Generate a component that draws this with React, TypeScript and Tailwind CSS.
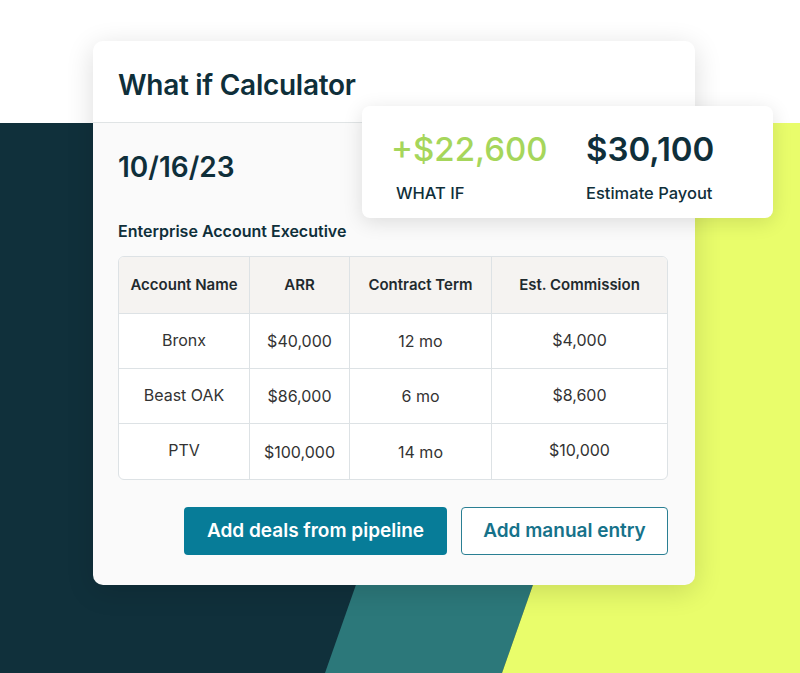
import React from "react";

const rows = [
  { name: "Bronx", arr: "$40,000", term: "12 mo", comm: "$4,000" },
  { name: "Beast OAK", arr: "$86,000", term: "6 mo", comm: "$8,600" },
  { name: "PTV", arr: "$100,000", term: "14 mo", comm: "$10,000" },
];

const cols = "grid grid-cols-[131px_100px_142px_175px]";

function Backdrop() {
  // decorative stripes behind the card
  return (
    <svg className="absolute inset-0" width="800" height="673" viewBox="0 0 800 673">
      <rect x="0" y="123" width="800" height="550" fill="#10303b" />
      <polygon points="518,123 695,123 502,673 325,673" fill="#2c787a" />
      <polygon points="695,123 800,123 800,673 502,673" fill="#e9fd6b" />
    </svg>
  );
}

function DealsTable() {
  return (
    <div className="w-[550px] border border-[#dde2e5] rounded-[6px] overflow-hidden bg-white">
      <div className={`${cols} h-[57px] bg-[#f5f3f1] border-b border-[#dde2e5] text-[15px] font-semibold text-[#1f2a2e]`}>
        <div className="flex items-center justify-center border-r border-[#dde2e5]">Account Name</div>
        <div className="flex items-center justify-center border-r border-[#dde2e5]">ARR</div>
        <div className="flex items-center justify-center border-r border-[#dde2e5]">Contract Term</div>
        <div className="flex items-center justify-center">Est. Commission</div>
      </div>
      {rows.map((r, i) => (
        <div
          key={r.name}
          className={`${cols} h-[55px] text-[16px] text-[#333] ${i < rows.length - 1 ? "border-b border-[#dde2e5]" : ""}`}
        >
          <div className="flex items-center justify-center pb-[3px] border-r border-[#dde2e5]">{r.name}</div>
          <div className="flex items-center justify-center border-r border-[#dde2e5]">{r.arr}</div>
          <div className="flex items-center justify-center border-r border-[#dde2e5]">{r.term}</div>
          <div className="flex items-center justify-center pb-[3px]">{r.comm}</div>
        </div>
      ))}
    </div>
  );
}

export default function App() {
  return (
    <div
      className="relative w-[800px] h-[673px] overflow-hidden bg-white"
      style={{ fontFamily: "Inter, 'Noto Sans', sans-serif" }}
    >
      <Backdrop />

      <div className="relative pt-[41px] pl-[93px]">
        {/* Calculator card */}
        <div className="w-[602px] h-[544px] rounded-[10px] overflow-hidden bg-[#fafafa] shadow-[0_6px_28px_rgba(0,0,0,0.14)]">
          <div className="h-[82px] px-[25px] pt-[6px] flex items-center bg-white border-b border-[#e0e4e5]">
            <h1 className="text-[28px] font-semibold text-[#0f2f3a] tracking-[-0.01em]">What if Calculator</h1>
          </div>

          <div className="pl-[25px] pr-[27px]">
            <div className="h-[82px] pt-[6px] flex items-center">
              <p className="text-[28px] font-semibold text-[#0f2f3a]">10/16/23</p>
            </div>
            <p className="pt-[14px] text-[16px] leading-[24px] font-semibold text-[#0f2f3a]">
              Enterprise Account Executive
            </p>
            <div className="mt-[13px]">
              <DealsTable />
            </div>

            <div className="mt-[27px] flex justify-end gap-[14px]">
              <button className="w-[263px] h-[48px] rounded-[4px] bg-[#077c98] text-white text-[19px] font-semibold">
                Add deals from pipeline
              </button>
              <button className="w-[207px] h-[48px] rounded-[4px] border border-[#2a7f93] bg-white text-[#16728a] text-[19px] font-semibold">
                Add manual entry
              </button>
            </div>
          </div>
        </div>
      </div>

      {/* Floating summary */}
      <div className="absolute left-[362px] top-[106px] w-[411px] h-[112px] rounded-[8px] bg-white shadow-[0_4px_20px_rgba(0,0,0,0.12)] pl-[29px] flex">
        <div className="w-[195px] pt-[23px]">
          <p className="text-[33px] leading-[40px] font-medium text-[#a6d65b]">+$22,600</p>
          <p className="mt-[12px] ml-[5px] text-[16.5px] font-medium text-[#0f2f3a]">WHAT IF</p>
        </div>
        <div className="pt-[23px]">
          <p className="text-[33px] leading-[40px] font-semibold text-[#0f2f3a]">$30,100</p>
          <p className="mt-[12px] text-[16.5px] font-medium text-[#0f2f3a]">Estimate Payout</p>
        </div>
      </div>
    </div>
  );
}
